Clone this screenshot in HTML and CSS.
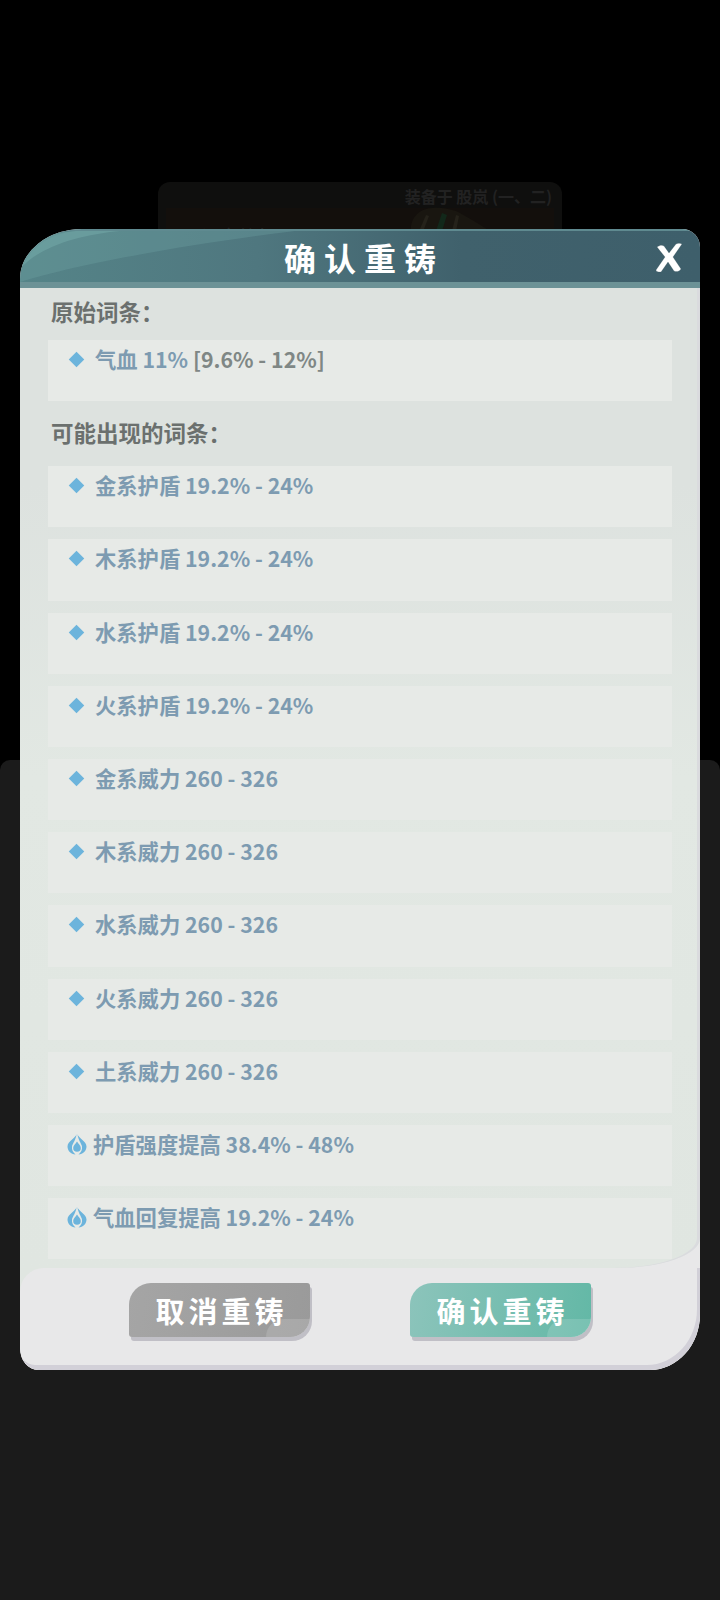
FILE: index.html
```html
<!DOCTYPE html>
<html lang="zh">
<head>
<meta charset="utf-8">
<title>确认重铸</title>
<link rel="stylesheet" href="styles.css">
</head>
<body>
<div class="backdrop">
  <div class="ground"></div>
  <div class="card">
    <div class="card-slot">装备于 股岚 (一、二)</div>
    <div class="card-body">
      <span class="card-name">心剑诀</span>
      <svg class="card-art" viewBox="0 0 90 24" aria-hidden="true"><path d="M3 24C2 12 10 2 24 1c10-1 16 1 24 3 8 4 18 10 34 20z" fill="#191610"/><path d="M28 24l6-18 5 2-5 16z" fill="#12281a"/><path d="M12 22l6-14 3 1-5 13zM44 24l4-16 3 1-3 15z" fill="#25221a"/></svg>
    </div>
  </div>
</div>

<main class="modal">
  <header class="modal-head">
    <svg class="swoosh" viewBox="0 0 680 54" preserveAspectRatio="none" aria-hidden="true">
      <path d="M0 54C60 34 180 12 275 0H60C30 0 0 22 0 54z" fill="#6fa6a6" fill-opacity=".32"/>
      <path d="M0 40C20 16 60 4 100 0H60C28 0 4 14 0 40z" fill="#7cb5b1" fill-opacity=".4"/>
    </svg>
    <h1 class="modal-title">确认重铸</h1>
    <button class="close" aria-label="关闭">
      <svg viewBox="0 0 28 30" class="close-icon" aria-hidden="true"><path d="M2 4c3-2 5-2 7-1l5 7 7-9c2-1 4-1 6 0l-9 13 8 12c-2 3-5 3-7 2l-6-9-7 10c-2 0-5 0-5-2l9-13z" fill="#fff" stroke="#2f4a50" stroke-opacity=".35" stroke-width=".6"/></svg>
    </button>
  </header>

  <section class="panel">
    <h2 class="section-title">原始词条：</h2>
    <div class="row">
      <i class="diamond"></i><span class="row-text">气血 11% <span class="range">[9.6% - 12%]</span></span>
    </div>

    <h2 class="section-title second">可能出现的词条：</h2>
    <div class="list">
      <div class="row"><i class="diamond"></i><span class="row-text">金系护盾 19.2% - 24%</span></div>
      <div class="row"><i class="diamond"></i><span class="row-text">木系护盾 19.2% - 24%</span></div>
      <div class="row"><i class="diamond"></i><span class="row-text">水系护盾 19.2% - 24%</span></div>
      <div class="row"><i class="diamond"></i><span class="row-text">火系护盾 19.2% - 24%</span></div>
      <div class="row"><i class="diamond"></i><span class="row-text">金系威力 260 - 326</span></div>
      <div class="row"><i class="diamond"></i><span class="row-text">木系威力 260 - 326</span></div>
      <div class="row"><i class="diamond"></i><span class="row-text">水系威力 260 - 326</span></div>
      <div class="row"><i class="diamond"></i><span class="row-text">火系威力 260 - 326</span></div>
      <div class="row"><i class="diamond"></i><span class="row-text">土系威力 260 - 326</span></div>
      <div class="row">
        <svg class="drop" viewBox="0 0 20 21" aria-hidden="true"><path d="M9.500 0C9 4 .5 7 .5 12.500 .5 17 4 20 8.500 20.500 6 18.500 4.500 15.500 5 12.500 5.500 9.500 9 6 9.500 0zM10.500 0C11 6 14.500 9.500 15 12.500 15.500 15.500 14 18.500 11.500 20.500 16 20 19.500 17 19.500 12.500 19.500 7 11 4 10.500 0z" fill="#6cb4dc"/><path d="M10 7.500c1.500 2.500 3.800 4 3.800 6.500a3.800 3.800 0 0 1-7.600 0c0-2.500 2.300-4 3.800-6.500z" fill="#6cb4dc"/></svg>
        <span class="row-text">护盾强度提高 38.4% - 48%</span>
      </div>
      <div class="row">
        <svg class="drop" viewBox="0 0 20 21" aria-hidden="true"><path d="M9.500 0C9 4 .5 7 .5 12.500 .5 17 4 20 8.500 20.500 6 18.500 4.500 15.500 5 12.500 5.500 9.500 9 6 9.500 0zM10.500 0C11 6 14.500 9.500 15 12.500 15.500 15.500 14 18.500 11.500 20.500 16 20 19.500 17 19.500 12.500 19.500 7 11 4 10.500 0z" fill="#6cb4dc"/><path d="M10 7.500c1.500 2.500 3.800 4 3.800 6.500a3.800 3.800 0 0 1-7.600 0c0-2.500 2.300-4 3.800-6.500z" fill="#6cb4dc"/></svg>
        <span class="row-text">气血回复提高 19.2% - 24%</span>
      </div>
    </div>
  </section>

  <footer class="modal-foot">
    <button class="btn btn-cancel">取消重铸</button>
    <button class="btn btn-confirm">确认重铸</button>
  </footer>
</main>
</body>
</html>
```

FILE: styles.css
```css
* { box-sizing: border-box; }

html, body {
  margin: 0;
  padding: 0;
  background: #000;
}

body {
  position: relative;
  width: 720px;
  height: 1600px;
  overflow: hidden;
  font-family: "Noto Sans CJK SC", "Noto Sans", sans-serif;
}

.backdrop {
  position: absolute;
  inset: 0;
}

.ground {
  position: absolute;
  left: 0;
  right: 0;
  top: 760px;
  bottom: 0;
  background: #1b1b1b;
  border-radius: 10px 10px 0 0;
}

.card {
  position: absolute;
  left: 158px;
  top: 182px;
  width: 404px;
  height: 70px;
  background: #0f0f0e;
  border-radius: 12px;
  padding: 0 8px;
}

.card-slot {
  height: 26px;
  line-height: 24px;
  padding: 2px 2px 0 0;
  text-align: right;
  font-size: 16px;
  font-weight: 700;
  color: #222;
}

.card-body {
  position: relative;
  height: 40px;
  background: #130f0c;
}

.card-name {
  position: absolute;
  left: 28px;
  top: 14px;
  font-size: 26px;
  line-height: 34px;
  color: #242423;
}

.card-art {
  position: absolute;
  left: 242px;
  top: -1px;
  width: 90px;
  height: 24px;
}

.modal {
  position: absolute;
  left: 20px;
  top: 229px;
  z-index: 1;
  width: 680px;
  height: 1141px;
  display: flex;
  flex-direction: column;
  overflow: hidden;
  background: #e8e8e9;
  border-radius: 62px 18px 50px 18px / 50px 18px 56px 22px;
}

.modal-head {
  position: relative;
  display: flex;
  align-items: center;
  justify-content: center;
  flex: none;
  height: 59px;
  background: linear-gradient(90deg, #558488 0%, #4f777f 35%, #40616c 65%, #3e5f6b 100%);
  border-top: 2px solid #5f8a90;
  border-bottom: 6px solid #6c9296;
}

.swoosh {
  position: absolute;
  left: 0;
  top: 0;
  width: 100%;
  height: 100%;
}

.modal-title {
  position: relative;
  margin: 0;
  padding-left: 8px;
  font-size: 32px;
  line-height: 48px;
  font-weight: 700;
  letter-spacing: 8px;
  color: #fff;
}

.close {
  position: absolute;
  right: 17px;
  top: 12px;
  width: 28px;
  height: 30px;
  padding: 0;
  background: none;
  border: 0;
}

.close-icon {
  display: block;
  width: 28px;
  height: 30px;
}

.panel {
  flex: none;
  height: 980px;
  padding: 8px 28px 0 28px;
  background: linear-gradient(180deg, #dde2df 0%, #dde2df 20%, #e2e8e3 50%, #e0e6e1 100%);
  border-radius: 0 0 84px 0 / 0 0 30px 0;
  box-shadow: inset -3px 0 0 #dadbde;
}

.section-title {
  margin: 0 0 14px 3px;
  font-size: 22.500px;
  line-height: 30px;
  font-weight: 700;
  color: #6b706e;
}

.section-title.second {
  margin: 16px 0 19px 3px;
}

.list {
  display: flex;
  flex-direction: column;
  gap: 12px;
}

.row {
  display: flex;
  align-items: flex-start;
  height: 61.200px;
  padding-left: 20px;
  background: #e7eae7;
}

.diamond {
  flex: none;
  width: 11px;
  height: 11px;
  margin: 14px 13px 0 3px;
  background: #6cb4dc;
  transform: rotate(45deg);
}

.drop {
  flex: none;
  width: 20px;
  height: 21px;
  margin: 9px 6px 0 -1px;
}

.row-text {
  font-size: 21.300px;
  line-height: 38px;
  font-weight: 700;
  color: #7d9bb1;
}

.range {
  color: #7f8785;
}

.modal-foot {
  position: relative;
  display: flex;
  justify-content: center;
  gap: 100px;
  flex: 1;
  padding-top: 15px;
  background: #e8e8e9;
  border-radius: 24px 0 0 0;
}

.modal-foot::before {
  content: "";
  position: absolute;
  left: 0;
  top: 0;
  width: 24px;
  height: 24px;
  background: #e0e6e1;
  z-index: -1;
}

.modal-foot::after {
  content: "";
  position: absolute;
  left: 0;
  right: 0;
  top: -40px;
  bottom: 0;
  border-radius: 0 0 50px 18px / 0 0 56px 22px;
  box-shadow: inset -3px -5px 0 #d2d0d8;
  clip-path: inset(40px 0 0 0);
  pointer-events: none;
}

.btn {
  position: relative;
  width: 181px;
  height: 54px;
  padding: 0 0 0 4px;
  border: 0;
  overflow: hidden;
  font-family: inherit;
  font-size: 29px;
  line-height: 54px;
  font-weight: 700;
  letter-spacing: 4px;
  color: #fff;
  border-radius: 22px 3px 20px 3px;
  box-shadow: 2px 4px 0 #c0bfc6;
}

.btn-cancel {
  background: linear-gradient(100deg, #a5a5a5, #9a9a9a);
}

.btn-confirm {
  background: linear-gradient(100deg, #8cc4bb, #63b8a6);
}

.btn::after {
  content: "";
  position: absolute;
  right: 0;
  bottom: 0;
  width: 44px;
  height: 18px;
  background: rgba(255, 255, 255, .14);
  border-radius: 22px 0 0 0;
}
```
